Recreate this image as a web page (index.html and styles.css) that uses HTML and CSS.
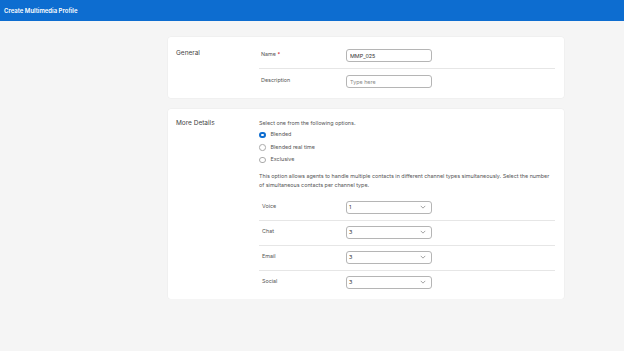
FILE: index.html
```html
<!DOCTYPE html>
<html lang="en">
<head>
    <meta charset="UTF-8">
    <meta name="viewport" content="width=device-width, initial-scale=1.0">
    <title>Create Multimedia Profile</title>
    <link rel="stylesheet" href="styles.css">
</head>
<body>
    <header class="top-bar">Create Multimedia Profile</header>

    <main class="page">
        <section class="card card-general">
            <div class="section-title">General</div>
            <div class="section-body">
                <div class="row">
                    <label class="row-label" for="mmpName">Name <span class="req">*</span></label>
                    <input class="text-input" type="text" id="mmpName" value="MMP_025">
                </div>
                <div class="row row-last">
                    <label class="row-label" for="mmpDesc">Description</label>
                    <input class="text-input" type="text" id="mmpDesc" placeholder="Type here">
                </div>
            </div>
        </section>

        <section class="card card-details">
            <div class="section-title">More Details</div>
            <div class="section-body">
                <p class="hint">Select one from the following options.</p>
                <div class="radio-list">
                    <label class="radio"><span class="dot checked"></span>Blended</label>
                    <label class="radio"><span class="dot"></span>Blended real time</label>
                    <label class="radio"><span class="dot"></span>Exclusive</label>
                </div>
                <p class="desc">This option allows agents to handle multiple contacts in different channel types simultaneously. Select the number of simultaneous contacts per channel type.</p>

                <div class="channels">
                    <div class="row">
                        <span class="row-label">Voice</span>
                        <div class="select-box"><span>1</span><svg class="chev" viewBox="0 0 8 5"><path d="M1 1l3 3 3-3" fill="none" stroke="#666" stroke-width="0.8"/></svg></div>
                    </div>
                    <div class="row">
                        <span class="row-label">Chat</span>
                        <div class="select-box"><span>3</span><svg class="chev" viewBox="0 0 8 5"><path d="M1 1l3 3 3-3" fill="none" stroke="#666" stroke-width="0.8"/></svg></div>
                    </div>
                    <div class="row">
                        <span class="row-label">Email</span>
                        <div class="select-box"><span>3</span><svg class="chev" viewBox="0 0 8 5"><path d="M1 1l3 3 3-3" fill="none" stroke="#666" stroke-width="0.8"/></svg></div>
                    </div>
                    <div class="row row-last">
                        <span class="row-label">Social</span>
                        <div class="select-box"><span>3</span><svg class="chev" viewBox="0 0 8 5"><path d="M1 1l3 3 3-3" fill="none" stroke="#666" stroke-width="0.8"/></svg></div>
                    </div>
                </div>
            </div>
        </section>
    </main>
</body>
</html>
```

FILE: styles.css
```css
* {
    box-sizing: border-box;
}
body {
    margin: 0;
    background-color: #f5f5f5;
    font-family: "Inter", "Liberation Sans", sans-serif;
    font-size: 5.4px;
    color: #555;
}
.top-bar {
    height: 21px;
    background-color: #0d6dd0;
    color: #fff;
    font-size: 6px;
    font-weight: 600;
    line-height: 21px;
    padding-left: 4px;
    margin-bottom: 16px;
}
.page {
    width: 396px;
    margin-left: 168px;
}
.card {
    display: grid;
    grid-template-columns: 83px 1fr;
    background-color: #fff;
    border-radius: 3px;
    box-shadow: 0 0 0 0.5px #ececec;
    padding: 0 9px 0 8px;
}
.card-general {
    padding-top: 12px;
    padding-bottom: 10px;
    margin-bottom: 11px;
}
.card-details {
    padding-top: 10px;
    padding-bottom: 10px;
}
.section-title {
    font-size: 6.5px;
    color: #444;
    line-height: 9px;
}
.row {
    display: flex;
    align-items: flex-start;
    border-bottom: 1px solid #e6e6e6;
    padding-bottom: 6px;
    margin-bottom: 6px;
}
.row-last {
    border-bottom: none;
    padding-bottom: 0;
    margin-bottom: 0;
}
.row-label {
    width: 87px;
    padding-left: 2px;
    padding-top: 1px;
    line-height: 8px;
    color: #555;
}
.req {
    color: #d0021b;
}
.text-input {
    width: 86px;
    height: 13px;
    border: 1px solid #b5b5b5;
    border-radius: 3px;
    padding: 0 3px;
    font-family: inherit;
    font-size: 5.4px;
    color: #333;
    outline: none;
}
.text-input::placeholder {
    color: #888;
}
.hint {
    margin: 0;
    line-height: 9px;
}
.radio-list {
    display: flex;
    flex-direction: column;
    gap: 3px;
    margin-top: 2px;
}
.radio {
    display: flex;
    align-items: center;
    gap: 5px;
    line-height: 9.5px;
}
.dot {
    width: 6.5px;
    height: 6.5px;
    border-radius: 50%;
    border: 0.8px solid #aaa;
    background: #fff;
}
.dot.checked {
    border: 2px solid #0d6dd0;
}
.desc {
    margin: 7px 0 0 0;
    line-height: 9px;
}
.channels {
    margin-top: 11px;
}
.channels .row {
    margin-bottom: 5px;
}
.channels .row-last {
    margin-bottom: 0;
}
.channels .row-label {
    padding-left: 3px;
}
.select-box {
    width: 86px;
    height: 13px;
    border: 1px solid #b5b5b5;
    border-radius: 3px;
    display: flex;
    align-items: center;
    justify-content: space-between;
    padding: 0 5px 0 2px;
    font-size: 5.4px;
    color: #333;
}
.chev {
    width: 6px;
    height: 4px;
}
```
